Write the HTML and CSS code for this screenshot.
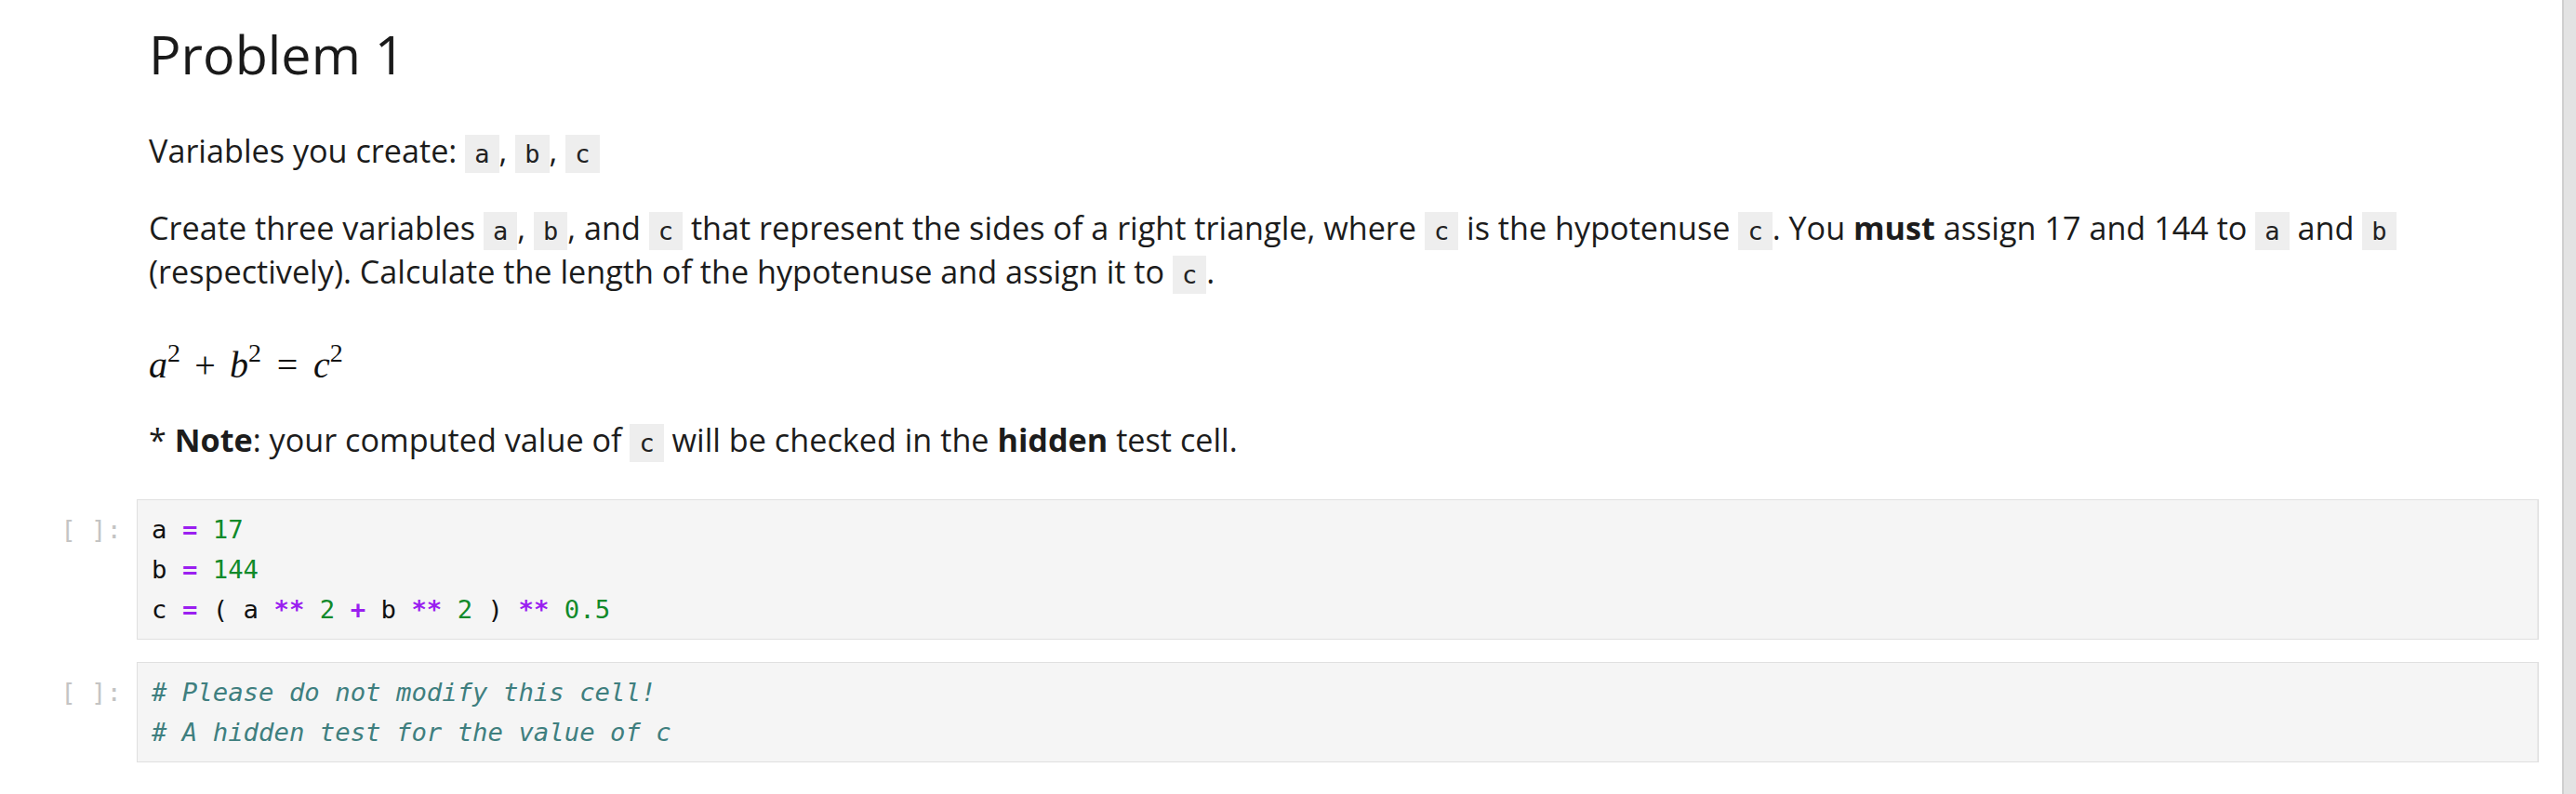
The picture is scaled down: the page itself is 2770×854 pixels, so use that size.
FILE: index.html
```html
<!DOCTYPE html>
<html lang="en">
<head>
<meta charset="utf-8">
<title>Problem 1</title>
<link rel="stylesheet" href="styles.css">
</head>
<body>
<div class="app">
  <main class="notebook">
    <section class="cell md-cell">
      <div class="prompt"></div>
      <div class="md-content">
        <h1>Problem 1</h1>
        <p class="vars">Variables you create: <code>a</code>, <code>b</code>, <code>c</code></p>
        <p class="desc">Create three variables <code>a</code>, <code>b</code>, and <code>c</code> that represent the sides of a right triangle, where <code>c</code> is the hypotenuse <code>c</code>. You <strong>must</strong> assign 17 and 144 to <code>a</code> and <code>b</code> (respectively). Calculate the length of the hypotenuse and assign it to <code>c</code>.</p>
        <p class="math"><i>a</i><sup>2</sup><span class="mop plus">+</span><i>b</i><sup>2</sup><span class="mop eq">=</span><i>c</i><sup>2</sup></p>
        <p class="note">* <strong>Note</strong>: your computed value of <code>c</code> will be checked in the <strong>hidden</strong> test cell.</p>
      </div>
    </section>
    <section class="cell code-cell">
      <div class="prompt">[ ]:</div>
      <div class="editor"><pre>a <span class="op">=</span> <span class="num">17</span>
b <span class="op">=</span> <span class="num">144</span>
c <span class="op">=</span> ( a <span class="op">**</span> <span class="num">2</span> <span class="op">+</span> b <span class="op">**</span> <span class="num">2</span> ) <span class="op">**</span> <span class="num">0.5</span></pre></div>
    </section>
    <section class="cell code-cell">
      <div class="prompt">[ ]:</div>
      <div class="editor"><pre><span class="cm"># Please do not modify this cell!</span>
<span class="cm"># A hidden test for the value of c</span></pre></div>
    </section>
  </main>
  <div class="scrollbar"></div>
</div>
</body>
</html>
```
FILE: styles.css
```css
html, body {
  margin: 0;
  padding: 0;
  background: #ffffff;
}

body {
  width: 2770px;
  height: 854px;
  overflow: hidden;
  font-family: "Open Sans", "Noto Sans", sans-serif;
}

.app {
  display: flex;
  height: 854px;
}

.notebook {
  flex: 1;
  padding-right: 25px;
}

.scrollbar {
  width: 15px;
  flex: none;
  box-sizing: border-box;
  background: #e3e3e3;
  border-left: 2px solid #cfcfcf;
}

.cell {
  display: flex;
}

.prompt {
  width: 147px;
  flex: none;
  box-sizing: border-box;
  padding: 11px 16px 0 0;
  text-align: right;
  font-family: "DejaVu Sans Mono", monospace;
  font-size: 27.3px;
  line-height: 43px;
  color: #c4c4c4;
}

.md-cell {
  margin-bottom: 39px;
}

.md-content {
  flex: 1;
  padding: 25px 13px 0 13px;
  color: #1c1c1c;
  font-size: 34.2px;
  line-height: 43px;
}

.md-content h1 {
  margin: 0 0 48px;
  font-size: 57.5px;
  font-weight: 400;
  line-height: 1.17;
  color: #1a1a1a;
}

.md-content p {
  margin: 0;
}

.md-content .vars {
  margin-bottom: 36px;
}

.md-content .desc {
  margin-bottom: 54px;
}

.md-content .math {
  margin-bottom: 37px;
}

.md-content strong {
  font-weight: 700;
}

.md-content code {
  font-family: "DejaVu Sans Mono", monospace;
  font-size: 27px;
  padding: 5px 10px;
  background: #eeeeee;
  color: #222;
}

.math {
  font-family: "Liberation Serif", serif;
  font-size: 40px;
  color: #111;
}

.math i {
  font-style: italic;
}

.math sup {
  font-size: 0.7em;
  line-height: 0;
  vertical-align: 0.6em;
  font-style: normal;
}

.mop {
  display: inline-block;
}

.mop.plus {
  margin: 0 0.38em;
}

.mop.eq {
  margin: 0 0.42em;
}

.code-cell {
  margin-bottom: 24px;
}

.editor {
  flex: 1;
  background: #f5f5f5;
  border: 1px solid #e0e0e0;
  padding: 10px 15px;
  box-shadow: inset -12px 0 0 -11px #e9e9e9;
}

.editor pre {
  margin: 0;
  font-family: "DejaVu Sans Mono", monospace;
  font-size: 27.3px;
  line-height: 43px;
  color: #111;
}

.op {
  color: #9a1ff0;
  font-weight: 700;
}

.num {
  color: #118a2a;
}

.cm {
  color: #3f7f7f;
  font-style: italic;
}
```
